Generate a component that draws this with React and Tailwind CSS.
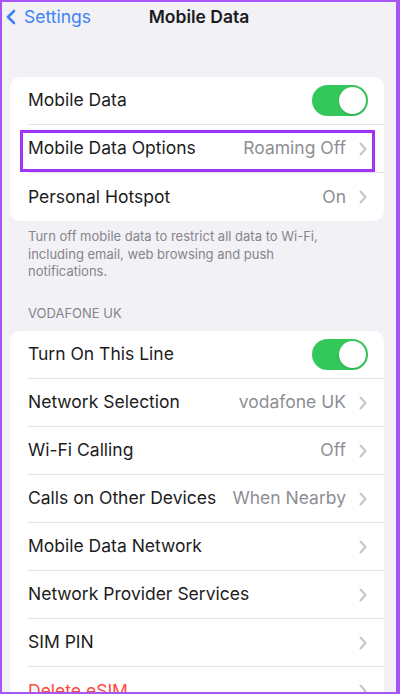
import { ChevronLeft } from "lucide-react";

const font = { fontFamily: "Inter, 'Noto Sans', sans-serif" };

const Chevron = () => (
  <svg width="8" height="14" viewBox="0 0 8 14" fill="none" className="shrink-0">
    <path
      d="M1.5 1.5 L6.5 7 L1.5 12.5"
      stroke="#c4c4c7"
      strokeWidth="2"
      strokeLinecap="round"
      strokeLinejoin="round"
    />
  </svg>
);

const Toggle = () => (
  <div className="w-[56px] h-[31px] rounded-full bg-[#34c759] p-[2px] flex justify-end">
    <div className="w-[27px] h-[27px] rounded-full bg-white shadow-sm" />
  </div>
);

const Row = ({ label, value, toggle, last, danger }) => (
  <div className="h-[48px] flex items-center pl-[18px]">
    <div
      className={`h-full flex-1 flex items-center pr-[16px] ${
        last ? "" : "border-b border-[#e2e2e6]"
      }`}
    >
      <span
        className={`flex-1 text-[17.5px] ${danger ? "text-[#ff4a40]" : "text-[#1c1c1e]"}`}
      >
        {label}
      </span>
      {toggle ? (
        <Toggle />
      ) : (
        <div className="flex items-center gap-[13px] pr-[1px]">
          {value && <span className="text-[17.5px] text-[#8e8e93]">{value}</span>}
          <Chevron />
        </div>
      )}
    </div>
  </div>
);

const Card = ({ children }) => (
  <div className="ml-[8px] mr-[12px] bg-white rounded-[10px] overflow-hidden">{children}</div>
);

export default function App() {
  return (
    <div
      className="w-[400px] h-[694px] overflow-hidden bg-[#f2f1f6] border-2 border-r-4 border-[#a855f7]"
      style={font}
    >
      {/* nav bar */}
      <div className="h-[30px] relative flex items-center">
        <div className="flex items-center text-[#3d82f5]">
          <ChevronLeft size={24} strokeWidth={2.6} className="-ml-[3px]" />
          <span className="text-[17.5px] ml-[1px]">Settings</span>
        </div>
        <div className="absolute left-0 right-0 text-center text-[17.5px] font-semibold text-[#1c1c1e] pointer-events-none">
          Mobile Data
        </div>
      </div>

      <div className="pt-[45px]">
        <Card>
          <Row label="Mobile Data" toggle />
          <div className="relative">
            <Row label="Mobile Data Options" value="Roaming Off" />
            <div className="absolute left-[10px] right-[9px] top-[5px] bottom-[1px] border-[3px] border-[#a033f5] pointer-events-none" />
          </div>
          <Row label="Personal Hotspot" value="On" last />
        </Card>

        <p className="pl-[26px] w-[352px] pt-[7px] text-[13px] leading-[17.5px] text-[#85858a]">
          Turn off mobile data to restrict all data to Wi-Fi, including email, web browsing and push
          notifications.
        </p>

        <div className="px-[26px] pt-[23px] pb-[8px] text-[13px] text-[#85858a] uppercase">
          Vodafone UK
        </div>

        <Card>
          <Row label="Turn On This Line" toggle />
          <Row label="Network Selection" value="vodafone UK" />
          <Row label="Wi-Fi Calling" value="Off" />
          <Row label="Calls on Other Devices" value="When Nearby" />
          <Row label="Mobile Data Network" />
          <Row label="Network Provider Services" />
          <Row label="SIM PIN" />
          <Row label="Delete eSIM" danger last />
        </Card>
      </div>
    </div>
  );
}
